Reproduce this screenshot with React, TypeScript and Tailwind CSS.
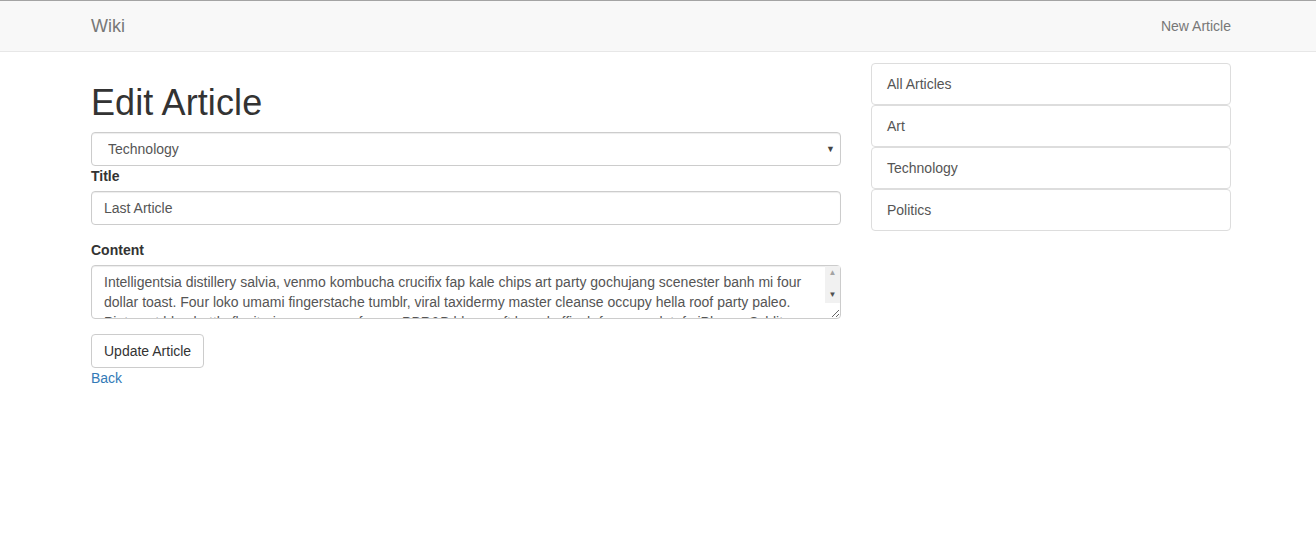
export default function App() {
  const content =
    'Intelligentsia distillery salvia, venmo kombucha crucifix fap kale chips art party gochujang scenester banh mi four dollar toast. Four loko umami fingerstache tumblr, viral taxidermy master cleanse occupy hella roof party paleo. Pinterest blue bottle flexitarian normcore forage PBR&B blog craft beer keffiyeh fanny pack tofu iPhone. Schlitz mixtape seitan, chillwave hashtag vinyl listicle.'

  const categories = ['All Articles', 'Art', 'Technology', 'Politics']

  return (
    <div className="min-h-[553px] bg-white font-['Liberation_Sans',Arial,sans-serif] text-[14px] leading-[20px] text-[#333]">
      {/* Navbar */}
      <nav className="h-[52px] border-t border-b border-t-[#a4a4a4] border-b-[#e7e7e7] bg-[#f8f8f8]">
        <div className="ml-[91px] flex h-full w-[1140px] items-center justify-between">
          <a href="#" className="text-[18px] leading-[20px] text-[#777]">Wiki</a>
          <a href="#" className="text-[#777]">New Article</a>
        </div>
      </nav>

      <div className="ml-[91px] flex w-[1140px] gap-[30px] pt-[11px]">
        {/* Form column */}
        <div className="w-[750px]">
          <h1 className="mt-[20px] mb-[10px] text-[36px] leading-[39px] font-normal tracking-[0.1px]">Edit Article</h1>

          <div className="relative">
            <select
              defaultValue="Technology"
              className="block h-[34px] w-full appearance-none rounded-[4px] border border-[#ccc] bg-white pl-[16px] text-[14px] text-[#555] shadow-[inset_0_1px_1px_rgba(0,0,0,0.075)] outline-none"
            >
              <option>Art</option>
              <option>Technology</option>
              <option>Politics</option>
            </select>
            <span className="pointer-events-none absolute top-[11px] right-[6px] text-[9px] leading-[12px] text-[#444]">▼</span>
          </div>

          <label className="mt-0 mb-[5px] block font-bold">Title</label>
          <input
            type="text"
            defaultValue="Last Article"
            className="block h-[34px] w-full rounded-[4px] border border-[#ccc] px-[12px] text-[14px] text-[#555] shadow-[inset_0_1px_1px_rgba(0,0,0,0.075)] outline-none"
          />

          <label className="mt-[15px] mb-[5px] block font-bold">Content</label>
          <div className="relative">
            <textarea
              rows={2}
              defaultValue={content}
              className="block h-[54px] w-full overflow-y-scroll rounded-[4px] border border-[#ccc] py-[6px] pr-[27px] pl-[12px] text-[14px] leading-[20px] text-[#555] shadow-[inset_0_1px_1px_rgba(0,0,0,0.075)] outline-none"
            />
            {/* scrollbar drawn over the textarea */}
            <div className="pointer-events-none absolute top-[1px] right-[1px] flex h-[37px] w-[15px] flex-col items-center justify-between bg-[#f1f1f1] pt-[2px] pb-[3px] text-[8px] leading-[10px]">
              <span className="text-[#a3a3a3]">▲</span>
              <span className="text-[#505050]">▼</span>
            </div>
          </div>

          <button className="mt-[15px] block h-[34px] rounded-[4px] border border-[#ccc] bg-white px-[12px] text-[14px] text-[#333]">
            Update Article
          </button>
          <a href="#" className="block text-[#337ab7]">Back</a>
        </div>

        {/* Category list */}
        <div className="w-[360px]">
          {categories.map((c) => (
            <a
              key={c}
              href="#"
              className="block h-[42px] rounded-[4px] border border-[#ddd] bg-white px-[15px] py-[10px] text-[#555]"
            >
              {c}
            </a>
          ))}
        </div>
      </div>
    </div>
  )
}
